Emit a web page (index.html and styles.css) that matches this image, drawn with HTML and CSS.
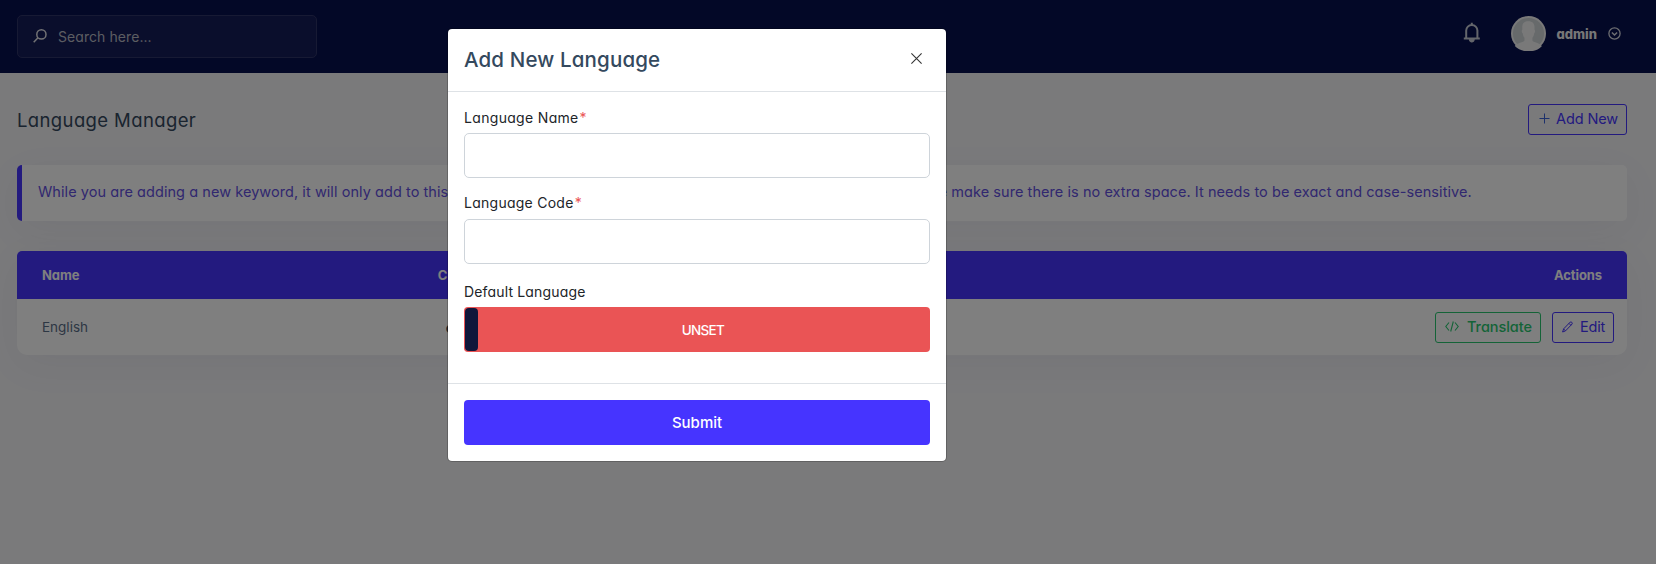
FILE: index.html
```html
<!DOCTYPE html>
<html lang="en">
<head>
<meta charset="utf-8">
<title>Language Manager</title>
<link rel="stylesheet" href="styles.css">
</head>
<body>
<div class="page">
  <nav class="navbar">
    <label class="search">
      <svg class="search-icon" width="14" height="14" viewBox="0 0 14 14" fill="none" stroke="currentColor" stroke-width="1.5"><circle cx="8.4" cy="5.4" r="4.6"/><path d="M5 8.8 .7 13.3"/></svg>
      <span class="search-text">Search here...</span>
    </label>
    <div class="nav-right">
      <svg class="bell" width="18" height="21" viewBox="0 0 18 21" fill="none" stroke="currentColor" stroke-width="2"><path d="M3.2 16.3V8.6a5.6 5.6 0 0 1 11.2 0v7.7"/><path d="M.8 16.5h16M8.8 3V.8"/><path d="M6.300 17.300h5a2.500 2.800 0 0 1-5 0z" fill="currentColor" stroke-width="1"/></svg>
      <svg class="avatar" width="35" height="35" viewBox="0 0 35 35"><circle cx="17.5" cy="17.5" r="17.5" fill="#f3f3f3"/><circle cx="17.5" cy="17.5" r="15.6" fill="#ced4d7"/><path d="M17.3 5.2c4.4 0 6.3 2.4 6.2 6.2v2.3c1 .3.6 2.8-.3 3.5-.3 2.2-1 3.5-1.8 4.6v2.8c.3 2.1 8.2 2.3 9.4 5.6-6 6.7-20.7 6.9-27-.1 1.5-3.3 9.2-3.3 9.7-5.5v-2.8c-.9-1-1.5-2.3-1.8-4.6-1-.7-1.300-3.200-.4-3.500v-3.300c.1-3 2-5.200 6-5.200z" fill="#f3f3f3"/></svg>
      <span class="user">admin</span>
      <svg class="chevron" width="13" height="13" viewBox="0 0 13 13" fill="none" stroke="currentColor" stroke-width="1.3"><circle cx="6.5" cy="6.5" r="5.6"/><path d="M3.9 5.5l2.600 2.500 2.600-2.500" stroke-width="1.5"/></svg>
    </div>
  </nav>
  <main class="content">
    <header class="heading">
      <h1 class="title">Language Manager</h1>
      <button class="btn btn-add"><svg width="11" height="11" viewBox="0 0 11 11" fill="none" stroke="#3a62d8" stroke-width="1"><path d="M5.5 .5v10M.5 5.5h10"/></svg><span>Add New</span></button>
    </header>
    <p class="notice">While you are adding a new keyword, it will only add to this current language only. Please be careful on entering a keyword, please make sure there is no extra space. It needs to be exact and case-sensitive.</p>
    <section class="table">
      <div class="row head"><span>Name</span><span class="code">Code</span><span class="actions">Actions</span></div>
      <div class="row body">
        <span class="lang">English</span><b class="code">en</b>
        <span class="actions">
          <button class="btn btn-translate"><svg width="14" height="11" viewBox="0 0 14 11" fill="none" stroke="currentColor" stroke-width="1.1"><path d="M4 1.5.8 5.5 4 9.5M10 1.5l3.2 4L10 9.5M8.3.5l-2.600 10"/></svg><span>Translate</span></button>
          <button class="btn btn-edit"><svg width="11" height="12" viewBox="0 0 11 12" fill="none" stroke="currentColor" stroke-width="1"><path d="M1.6 7.9 8.2 1.1c1-.8 2.7.8 1.9 1.9L3.5 9.9.6 11zM7 2.4l1.9 1.9M1.6 7.9l1.9 2"/></svg><span>Edit</span></button>
        </span>
      </div>
    </section>
  </main>
</div>
<div class="backdrop">
  <form class="modal">
    <header class="modal-head">
      <h2 class="modal-title">Add New Language</h2>
      <svg class="close" width="11" height="11" viewBox="0 0 11 11" fill="none" stroke="currentColor" stroke-width="1.1"><path d="M.4.4l10.2 10.2M10.6.4.4 10.6"/></svg>
    </header>
    <div class="modal-body">
      <label class="label name">Language Name<i class="req">*</i></label>
      <input class="field" type="text">
      <label class="label lcode">Language Code<i class="req">*</i></label>
      <input class="field" type="text">
      <label class="label default">Default Language</label>
      <div class="toggle"><span class="handle"></span><span class="toggle-text">UNSET</span></div>
    </div>
    <footer class="modal-foot"><button class="submit" type="button">Submit</button></footer>
  </form>
</div>
</body>
</html>
```
FILE: styles.css
```css
* { box-sizing: border-box; }
body {
  margin: 0;
  height: 564px;
  overflow: hidden;
  background: #f4f4f7;
  color: #5b6e88;
  font-family: Inter, "Open Sans", sans-serif;
  font-feature-settings: "cv11";
}
button { font: inherit; font-feature-settings: inherit; }
svg { display: block; flex: none; }
.page { height: 564px; }
.navbar {
  display: flex;
  align-items: flex-start;
  justify-content: space-between;
  height: 73px;
  padding: 15px 35px 0 17px;
  background: #07104f;
}
.search {
  display: flex;
  align-items: center;
  width: 300px;
  height: 43px;
  padding: 0 0 1px 15px;
  border: 1px solid #2f3468;
  border-radius: 5px;
  background: #141c58;
  color: #e4e4e8;
}
.search-text {
  margin-left: 11px;
  color: #b9bac4;
  font-size: 14px;
  letter-spacing: .07px;
}
.nav-right { display: flex; align-items: center; height: 37px; color: #e4e6ee; }
.bell { margin: 0 30px 3px 0; color: #c8ccd6; }
.avatar { margin-bottom: 1px; }
.user {
  margin: 0 11px 0 10px;
  color: #eee;
  font-size: 13px;
  font-weight: 800;
  letter-spacing: 0;
}
.chevron { margin-bottom: 1px; color: #d8dae2; }
.content { padding: 31px 29px 0 17px; }
.heading { display: flex; align-items: center; justify-content: space-between; height: 31px; }
.title {
  margin: 0;
  color: #34495e;
  font-size: 18.5px;
  font-weight: 400;
  letter-spacing: .38px;
}
.btn {
  display: flex;
  align-items: center;
  height: 31px;
  padding: 0 0 1px;
  border: 1px solid currentColor;
  border-radius: 3px;
  background: none;
  color: #4634ff;
  font-size: 14.5px;
  white-space: nowrap;
}
.btn-add { width: 99px; padding: 0 0 2px 10px; gap: 6px; letter-spacing: -.1px; }
.notice {
  height: 56px;
  margin: 30px 0;
  padding-left: 16px;
  border-left: 5px solid #4634ff;
  border-radius: 5px;
  background: #fff;
  box-shadow: 0 10px 40px rgba(60, 50, 120, .05);
  color: #6350e0;
  font-size: 14.5px;
  line-height: 54px;
  letter-spacing: .06px;
  white-space: nowrap;
}
.table {
  height: 104px;
  border-radius: 5px 5px 10px 10px;
  background: #fff;
  box-shadow: 0 10px 40px rgba(60, 50, 120, .05);
}
.row {
  display: grid;
  grid-template-columns: 363px 100px 1fr;
  align-items: center;
  padding-left: 25px;
}
.head {
  height: 48px;
  padding: 0 25px 1px;
  border-radius: 5px 5px 0 0;
  background: #4634ff;
  color: #fff;
  font-size: 13px;
  font-weight: 700;
  letter-spacing: -.1px;
}
.body { height: 56px; padding-right: 13px; color: #34495e; font-size: 14px; }
.lang { color: #5b6e88; font-size: 13.5px; }
.code { text-align: center; }
.head .code { letter-spacing: .2px; }
.body .code { letter-spacing: .8px; }
.actions { display: flex; justify-content: flex-end; gap: 11px; }
.btn-translate {
  width: 106px;
  padding-left: 9px;
  gap: 8px;
  color: #28c76f;
  font-weight: 500;
  letter-spacing: -.05px;
}
.btn-edit { width: 62px; padding-left: 9px; gap: 7px; letter-spacing: -.2px; }
.backdrop {
  position: absolute;
  inset: 0;
  display: flex;
  align-items: flex-start;
  justify-content: center;
  padding: 28px 262px 0 0;
  background: rgba(0, 0, 0, .5);
}
.modal {
  width: 500px;
  height: 434px;
  border: 1px solid rgba(0, 0, 0, .2);
  border-radius: 5px;
  background: #fff;
  background-clip: padding-box;
}
.modal-head {
  display: flex;
  align-items: center;
  justify-content: space-between;
  height: 63px;
  padding: 0 24px 1px 16px;
  border-bottom: 1px solid #dee2e6;
}
.modal-title {
  margin: 0;
  color: #34495e;
  font-size: 20.5px;
  font-weight: 500;
  letter-spacing: .15px;
}
.close { color: #333; margin-bottom: 2px; }
.modal-body { display: flex; flex-direction: column; height: 291px; padding: 15px 16px 0; }
.label {
  height: 26px;
  color: #212529;
  font-size: 14px;
  line-height: 21px;
  letter-spacing: .32px;
}
.lcode { height: 27px; margin-top: 14px; letter-spacing: .26px; }
.default { margin-top: 17px; letter-spacing: .16px; }
.req { margin-left: 1px; color: #ea5455; font-style: normal; }
.field {
  width: 100%;
  height: 45px;
  border: 1px solid #ced4da;
  border-radius: 5px;
  background: #fff;
}
.toggle {
  display: flex;
  height: 45px;
  padding: 1px;
  border-radius: 4px;
  background: #ea5455;
}
.handle { width: 13px; border-radius: 4px; background: #10163a; }
.toggle-text {
  flex: 1;
  padding-right: 1px;
  color: #fff;
  font-size: 13.5px;
  font-weight: 500;
  line-height: 44px;
  letter-spacing: -.7px;
  text-align: center;
}
.modal-foot { padding: 16px; border-top: 1px solid #dee2e6; }
.submit {
  width: 100%;
  height: 45px;
  padding: 0 0 1px;
  border: 0;
  border-radius: 4px;
  background: #4634ff;
  color: #fff;
  font-size: 15px;
  font-weight: 500;
}
```
